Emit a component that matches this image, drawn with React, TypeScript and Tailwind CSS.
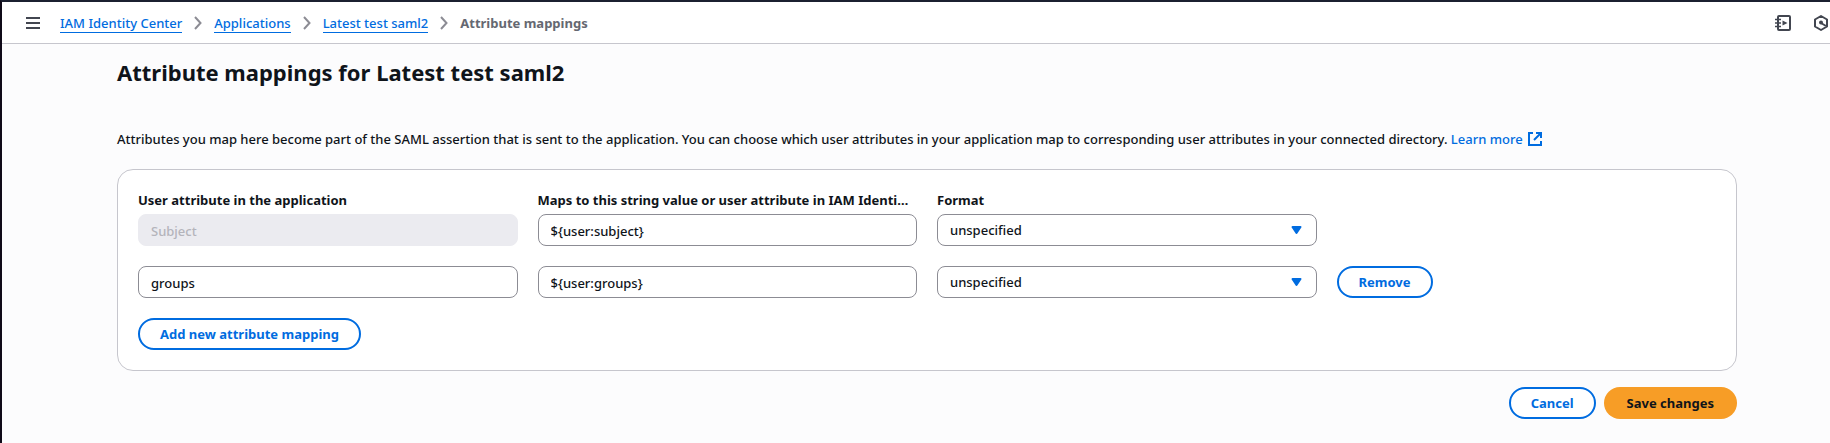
import { useState } from "react"

const crumbs = ["IAM Identity Center", "Applications", "Latest test saml2"]

const initialRows = [
  { id: 1, name: "Subject", value: "${user:subject}", locked: true },
  { id: 2, name: "groups", value: "${user:groups}", locked: false },
]

const inputStyle = "w-full h-8 rounded-lg border border-[#8c8c94] bg-white px-3 pt-[2px] focus:outline-none"
const outlineButton = "h-8 rounded-full border-2 border-[#006ce0] bg-white px-5 font-bold text-[#006ce0] cursor-pointer"

function Chevron() {
  return (
    <svg width="16" height="16" viewBox="0 0 16 16" fill="none" stroke="#8c8c94" strokeWidth="2" aria-hidden="true">
      <path d="M5 2l5.5 6L5 14" />
    </svg>
  )
}

function NotebookIcon() {
  return (
    <svg width="16" height="16" viewBox="0 0 16 16" fill="none" stroke="#424650" strokeWidth="2" aria-hidden="true">
      <rect x="3" y="1" width="12" height="14" rx="1" />
      <path d="M0 4.5h6M0 8h6M0 11.5h6" strokeWidth="1.5" />
      <path d="M7.5 5.5v5l5-2.5z" fill="#424650" stroke="none" />
    </svg>
  )
}

function HexagonIcon() {
  return (
    <svg width="16" height="16" viewBox="0 0 16 16" fill="none" stroke="#424650" strokeWidth="2" aria-hidden="true">
      <path d="M8 1l6 3.5v7L8 15l-6-3.5v-7z" strokeLinejoin="round" />
      <circle cx="8" cy="7.5" r="2" fill="#424650" stroke="none" />
      <path d="M8 8l5 3" />
    </svg>
  )
}

function ExternalIcon() {
  return (
    <svg className="inline-block ml-1 align-[-3px]" width="16" height="16" viewBox="0 0 16 16" fill="none" stroke="currentColor" strokeWidth="2" aria-hidden="true">
      <path d="M6 2H2v12h12v-4" />
      <path d="M9 2h5v5M14 2L7 9" />
    </svg>
  )
}

export default function App() {
  const [rows, setRows] = useState(initialRows)

  const addRow = () => setRows([...rows, { id: Date.now(), name: "", value: "", locked: false }])
  const removeRow = (id: number) => setRows(rows.filter((row) => row.id !== id))

  return (
    <div className="min-h-screen border-t-2 border-l-2 border-t-[#1b2030] border-l-[#0f0a18] bg-[#fcfcfd] font-['Noto_Sans','Open_Sans',sans-serif] text-[13px] leading-5 font-medium text-[#0f141a]">
      <header className="flex h-[42px] items-center border-b border-[#c6c6cd] bg-white pl-[23px] pr-px">
        <button aria-label="Open navigation" className="cursor-pointer">
          <svg width="16" height="16" viewBox="0 0 16 16" stroke="#424650" strokeWidth="2" aria-hidden="true">
            <path d="M1 3h14M1 8h14M1 13h14" />
          </svg>
        </button>
        <nav aria-label="Breadcrumbs" className="ml-[19px]">
          <ol className="flex items-center">
            {crumbs.map((crumb) => (
              <li key={crumb} className="flex items-center">
                <a href="#" className="border-b border-[#006ce0] pt-px leading-[18px] text-[#006ce0]">{crumb}</a>
                <span className="mx-2"><Chevron /></span>
              </li>
            ))}
            <li className="font-bold text-[#656871]" aria-current="page">Attribute mappings</li>
          </ol>
        </nav>
        <div className="ml-auto flex items-center gap-[22px]">
          <button aria-label="Tutorials" className="cursor-pointer"><NotebookIcon /></button>
          <button aria-label="Diagnostics" className="cursor-pointer"><HexagonIcon /></button>
        </div>
      </header>

      <main className="pl-[115px] pr-[93px] pt-[13px]">
        <h1 className="text-[22px] leading-[30px] font-bold">Attribute mappings for Latest test saml2</h1>
        <p className="mt-[42px]">
          Attributes you map here become part of the SAML assertion that is sent to the application. You can choose which user attributes in your application map to corresponding user attributes in your connected directory.{" "}
          <a href="#" className="whitespace-nowrap text-[#006ce0]">Learn more<ExternalIcon /></a>
        </p>

        <form onSubmit={(e) => e.preventDefault()}>
          <section className="mt-5 rounded-2xl border border-[#c6c6cd] bg-white p-5">
            <div className="mb-1 grid grid-cols-4 gap-5 font-bold">
              <div id="col-name" className="truncate">User attribute in the application</div>
              <div id="col-value" className="truncate">Maps to this string value or user attribute in IAM Identi…</div>
              <div id="col-format" className="truncate">Format</div>
            </div>

            <div className="flex flex-col gap-5">
              {rows.map((row) => (
                <div key={row.id} className="grid grid-cols-4 gap-5">
                  {row.locked ? (
                    <input type="text" aria-labelledby="col-name" defaultValue={row.name} disabled className="w-full h-8 rounded-lg border border-[#ebebf0] bg-[#ebebf0] px-3 pt-[2px] text-[#b4b4bb]" />
                  ) : (
                    <input type="text" aria-labelledby="col-name" defaultValue={row.name} className={inputStyle} />
                  )}
                  <input type="text" aria-labelledby="col-value" defaultValue={row.value} className={inputStyle} />
                  <div className="relative">
                    <select aria-labelledby="col-format" className="w-full h-8 appearance-none rounded-lg border border-[#8c8c94] bg-white px-3 focus:outline-none">
                      <option>unspecified</option>
                      <option>basic</option>
                      <option>emailAddress</option>
                      <option>persistent</option>
                    </select>
                    <svg className="pointer-events-none absolute right-3 top-2" width="16" height="16" viewBox="0 0 16 16" fill="#006ce0" stroke="#006ce0" strokeWidth="2" strokeLinejoin="round" aria-hidden="true">
                      <path d="M3.5 5h8l-4 6z" />
                    </svg>
                  </div>
                  {!row.locked && (
                    <div>
                      <button type="button" onClick={() => removeRow(row.id)} className={outlineButton}>Remove</button>
                    </div>
                  )}
                </div>
              ))}
            </div>

            <button type="button" onClick={addRow} className={`mt-5 block ${outlineButton}`}>Add new attribute mapping</button>
          </section>

          <div className="mt-4 flex justify-end gap-2">
            <button type="button" className={outlineButton}>Cancel</button>
            <button type="submit" className="h-8 rounded-full bg-[#f79d26] px-[23px] font-bold cursor-pointer">Save changes</button>
          </div>
        </form>
      </main>
    </div>
  )
}
